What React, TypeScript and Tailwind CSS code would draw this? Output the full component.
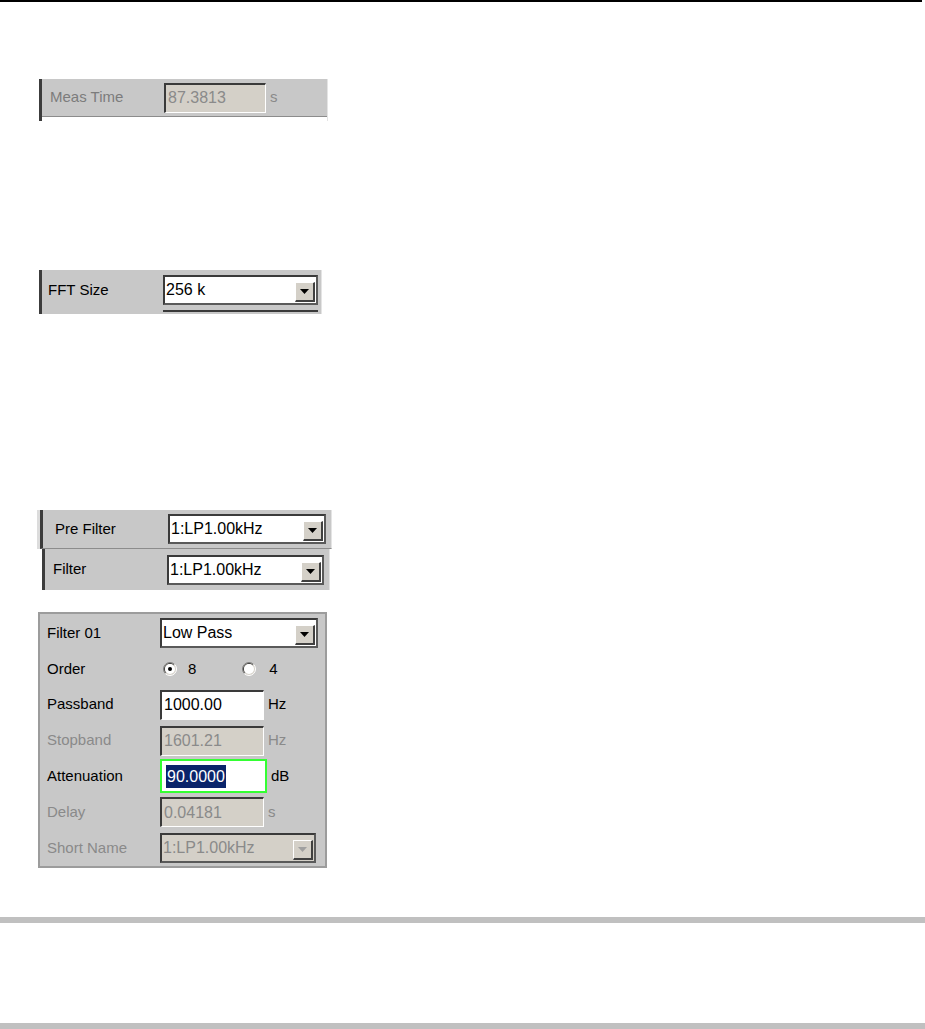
import React from 'react';

const font = "font-['Liberation_Sans',Arial,sans-serif]";

const ArrowButton: React.FC<{ disabled?: boolean }> = ({ disabled }) => (
  <div className="w-[20px] h-[20px] mr-[1px] mb-[1px] flex-none flex items-center justify-center bg-[#d4d0c8] border-t border-l border-t-white border-l-white border-r-2 border-b-2 border-r-[#404040] border-b-[#404040]">
    <svg width="9" height="5" viewBox="0 0 9 5">
      <path d="M0 0 H9 L4.5 5 Z" fill={disabled ? '#a0a0a0' : '#000'} />
    </svg>
  </div>
);

const Dropdown: React.FC<{ value: string; width: number; disabled?: boolean }> = ({ value, width, disabled }) => (
  <div
    className={`h-[30px] flex items-end justify-between border-t-2 border-l-2 border-r-2 border-b-2 border-t-[#3a3a3a] border-l-[#3a3a3a] border-r-[#5a5a5a] border-b-[#5a5a5a] ${disabled ? 'bg-[#d4d0c8] text-[#8a8a8a]' : 'bg-white text-black'}`}
    style={{ width }}
  >
    <span className="self-center pl-[1px] text-[16px] leading-none">{value}</span>
    <ArrowButton disabled={disabled} />
  </div>
);

const Field: React.FC<{ value: string; disabled?: boolean; width?: number }> = ({ value, disabled, width = 104 }) => (
  <div
    className={`h-[30px] flex items-center pl-[2px] border-t-2 border-l-2 border-r border-b border-t-[#3a3a3a] border-l-[#3a3a3a] border-r-white border-b-white ${disabled ? 'bg-[#d4d0c8] text-[#8a8a8a]' : 'bg-white text-black'}`}
    style={{ width }}
  >
    <span className="text-[16px] leading-none">{value}</span>
  </div>
);

const Radio: React.FC<{ checked?: boolean }> = ({ checked }) => (
  <svg width="14" height="14" viewBox="0 0 14 14" className="flex-none">
    <circle cx="7" cy="7" r="6.5" fill="#d4d0c8" />
    <path d="M2.4 11.6 A6.5 6.5 0 0 1 11.6 2.4" stroke="#808080" strokeWidth="1" fill="none" />
    <path d="M3.1 10.9 A5.5 5.5 0 0 1 10.9 3.1" stroke="#404040" strokeWidth="1" fill="none" />
    <path d="M11.6 2.4 A6.5 6.5 0 0 1 2.4 11.6" stroke="#ffffff" strokeWidth="1" fill="none" />
    <circle cx="7" cy="7" r="5" fill="#ffffff" />
    {checked && <circle cx="7" cy="7" r="2" fill="#000" />}
  </svg>
);

const Row: React.FC<{ label: string; dim?: boolean; children: React.ReactNode }> = ({ label, dim, children }) => (
  <div className="h-[36px] flex items-center pl-[7px]">
    <span className={`w-[113px] flex-none text-[15px] ${dim ? 'text-[#8a8a8a]' : 'text-black'}`}>{label}</span>
    {children}
  </div>
);

const Unit: React.FC<{ text: string; dim?: boolean }> = ({ text, dim }) => (
  <span className={`ml-[4px] text-[15px] ${dim ? 'text-[#8a8a8a]' : 'text-black'}`}>{text}</span>
);

export default function App() {
  return (
    <div className={`w-[925px] h-[1029px] bg-white overflow-hidden flex flex-col ${font}`}>
      <div className="h-[2px] w-[922px] bg-black flex-none" />

      {/* Meas Time */}
      <div className="mt-[77px] ml-[39px] w-[289px] h-[42px] flex flex-col border-l-[3px] border-l-[#3c3c3c] border-r border-r-[#e4e4e4]">
        <div className="h-[38px] bg-[#c8c8c8] flex items-center pl-[8px] border-b border-b-[#8c8c8c]">
          <span className="w-[114px] flex-none text-[15px] text-[#7c7c7c]">Meas Time</span>
          <Field value="87.3813" disabled width={102} />
          <Unit text="s" dim />
        </div>
      </div>

      {/* FFT Size */}
      <div className="mt-[149px] ml-[39px] w-[283px] h-[44px] flex flex-col bg-[#c8c8c8] border-l-[3px] border-l-[#3c3c3c] border-r border-r-[#e4e4e4]">
        <div className="h-[40px] flex items-center pl-[6px]">
          <span className="w-[115px] flex-none text-[15px] text-black">FFT Size</span>
          <Dropdown value="256 k" width={155} />
        </div>
        <div className="ml-[121px] w-[155px] h-[2px] bg-[#3a3a3a]" />
      </div>

      {/* Pre Filter / Filter */}
      <div className="mt-[196px] flex flex-col">
        <div className="ml-[37px] w-[295px] border-l-[3px] border-l-[#dcdcdc]">
          <div className="h-[39px] bg-[#c8c8c8] flex items-center pl-[12px] border-l-[3px] border-l-[#3c3c3c] border-b border-b-[#8c8c8c] border-r border-r-[#e4e4e4]">
            <span className="w-[113px] flex-none text-[15px] text-black">Pre Filter</span>
            <Dropdown value="1:LP1.00kHz" width={158} />
          </div>
        </div>
        <div className="ml-[42px] w-[288px] h-[41px] bg-[#c8c8c8] flex items-center pl-[8px] border-l-[3px] border-l-[#3c3c3c] border-r border-r-[#e4e4e4]">
          <span className="w-[114px] flex-none text-[15px] text-black">Filter</span>
          <Dropdown value="1:LP1.00kHz" width={157} />
        </div>
      </div>

      {/* Filter 01 */}
      <div className="mt-[22px] ml-[38px] w-[289px] h-[256px] bg-[#c8c8c8] border-2 border-[#9c9c9c] pt-[1px] flex flex-col">
        <Row label="Filter 01">
          <Dropdown value="Low Pass" width={158} />
        </Row>
        <Row label="Order">
          <div className="flex items-center ml-[3px]">
            <Radio checked />
            <span className="ml-[11px] text-[15px]">8</span>
            <div className="ml-[46px]">
              <Radio />
            </div>
            <span className="ml-[13px] text-[15px]">4</span>
          </div>
        </Row>
        <Row label="Passband">
          <Field value="1000.00" />
          <Unit text="Hz" />
        </Row>
        <Row label="Stopband" dim>
          <Field value="1601.21" disabled />
          <Unit text="Hz" dim />
        </Row>
        <Row label="Attenuation">
          <div className="w-[107px] h-[34px] flex items-center pl-[4px] bg-white border-2 border-[#33ff33]">
            <span className="bg-[#0a246a] text-white text-[16px] leading-[23px] px-[1px]">90.0000</span>
          </div>
          <Unit text="dB" />
        </Row>
        <Row label="Delay" dim>
          <Field value="0.04181" disabled />
          <Unit text="s" dim />
        </Row>
        <Row label="Short Name" dim>
          <Dropdown value="1:LP1.00kHz" width={156} disabled />
        </Row>
      </div>

      <div className="mt-[49px] h-[6px] w-full bg-[#c0c0c0] flex-none" />
      <div className="mt-[100px] h-[6px] w-full bg-[#c0c0c0] flex-none" />
    </div>
  );
}
